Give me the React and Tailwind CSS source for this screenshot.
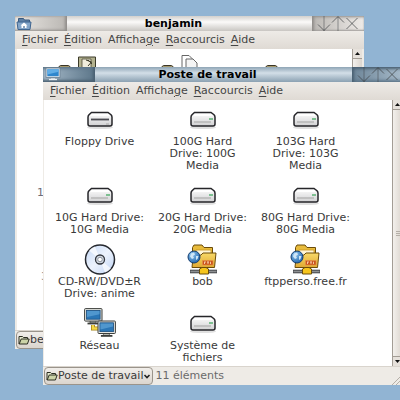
import React from "react";

const menus = [
  { before: "", key: "F", after: "ichier" },
  { before: "", key: "É", after: "dition" },
  { before: "Afficha", key: "g", after: "e" },
  { before: "", key: "R", after: "accourcis" },
  { before: "", key: "A", after: "ide" },
];

const places = [
  { name: "Floppy Drive", icon: "floppy" },
  { name: "100G Hard Drive: 100G Media", icon: "drive" },
  { name: "103G Hard Drive: 103G Media", icon: "drive" },
  { name: "10G Hard Drive: 10G Media", icon: "drive" },
  { name: "20G Hard Drive: 20G Media", icon: "drive" },
  { name: "80G Hard Drive: 80G Media", icon: "drive" },
  { name: "CD-RW/DVD±R Drive: anime", icon: "disc" },
  { name: "bob", icon: "ftp" },
  { name: "ftpperso.free.fr", icon: "ftp" },
  { name: "Réseau", icon: "network" },
  { name: "Système de fichiers", icon: "drive" },
];

function DriveIcon({ floppy }) {
  return (
    <svg width="32" height="32" viewBox="0 0 32 32">
      <ellipse cx="16" cy="23.5" rx="13" ry="1.6" fill="#000" opacity=".12" />
      <path
        d="M7.500 8.500h16.500l3 2.200c.7.7 1 1.500 1 2.500v6.800c0 1.400-.7 2-2 2H6c-1.300 0-2-.6-2-2v-6.800c0-1 .3-1.800 1-2.500z"
        fill="url(#driveBody)"
        stroke="#26262a"
        strokeWidth="1.500"
      />
      <path d="M8 10h16l2 2H6z" fill="#fff" />
      {floppy ? (
        <>
          <path d="M7 15.500h18" stroke="#4a4a50" strokeWidth="1.800" />
          <path d="M22 20h3" stroke="#aaa" />
        </>
      ) : (
        <>
          <path d="M7 18h17" stroke="#b4b4b4" strokeWidth="1.400" />
          <path d="M22 15h4" stroke="#4fae6b" strokeWidth="1.400" />
        </>
      )}
    </svg>
  );
}

function DiscIcon() {
  return (
    <svg width="32" height="32" viewBox="0 0 32 32">
      <circle cx="16" cy="15.500" r="14.500" fill="url(#discBody)" stroke="#25282e" strokeWidth="1.500" />
      <path d="M16 15.500L5 6.500a14 14 0 0 1 6-4z" fill="#fff" opacity=".7" />
      <path d="M16 15.500l11 9a14 14 0 0 1-6 4z" fill="#fff" opacity=".7" />
      <circle cx="16" cy="15.500" r="4.500" fill="#d4dbe5" stroke="#33373e" strokeWidth="1.300" />
      <circle cx="16" cy="15.500" r="2.300" fill="#fff" stroke="#8b929c" />
    </svg>
  );
}

function FtpIcon() {
  return (
    <svg width="32" height="32" viewBox="0 0 32 32">
      <path d="M5.500 20V3.500L7 1h8l2 2.500h8.500V12" fill="#e8bb3c" stroke="#6b4c0a" />
      <path d="M9 12V6h15v6" fill="#fff6d5" stroke="#c89520" strokeWidth=".8" />
      <path d="M5 23.500L6 13l8-2 2-2h13l-1.500 14.500z" fill="url(#folderBody)" stroke="#6b4c0a" />
      <rect x="15.500" y="16.500" width="10.500" height="4.500" fill="#c9541c" stroke="#e89248" strokeWidth=".6" />
      <path d="M17.500 17.700v2.300M17.500 18h1.500M21 17.700v2.300M23.500 17.700v2.300M20 18h2" stroke="#ffe1c2" strokeWidth=".8" />
      <circle cx="7" cy="13" r="6" fill="url(#globeBody)" stroke="#123c70" />
      <path d="M4 9.500l3-1 1 2-2 1.500 1 2-2 1-2-2.500zM9 12h2.500l-1 3-1.500 1z" fill="#cfe6f7" />
      <path d="M3 27.500h27" stroke="#45474a" strokeWidth="3.600" />
      <path d="M3.500 27.500h26" stroke="#8d9092" strokeWidth="1.600" />
      <path d="M12.500 30v-5l2.500-1.500h4l2.500 1.500v5z" fill="#f6c51d" stroke="#6b4c0a" />
    </svg>
  );
}

function Monitor({ x, y }) {
  return (
    <g transform={`translate(${x} ${y})`}>
      <path d="M6 12.500h6v2.500H6z" fill="#bfc3bd" stroke="#4a4c48" strokeWidth=".7" />
      <path d="M3.500 15.500h11.500" stroke="#3d3f3c" strokeWidth="1.800" />
      <rect x=".6" y=".6" width="17.400" height="12.500" rx=".8" fill="#e4e5e0" stroke="#3d3f3c" />
      <rect x="2.500" y="2.400" width="13.600" height="8.800" fill="#2a76b6" stroke="#1b4f80" strokeWidth=".8" />
      <path d="M3 3h12.600v3.200L3 9z" fill="#6aaede" opacity=".6" />
    </g>
  );
}

function NetworkIcon() {
  return (
    <svg width="32" height="32" viewBox="0 0 32 32">
      <path d="M9 17v3.500h6" fill="none" stroke="#a4831a" strokeWidth="4" />
      <path d="M9 17v3.500h6" fill="none" stroke="#f6d844" strokeWidth="2.400" />
      <Monitor x={0} y={0} />
      <Monitor x={13.4} y={12.4} />
    </svg>
  );
}

function PlaceIcon({ icon }) {
  if (icon === "disc") return <DiscIcon />;
  if (icon === "ftp") return <FtpIcon />;
  if (icon === "network") return <NetworkIcon />;
  return <DriveIcon floppy={icon === "floppy"} />;
}

function SharedGradients() {
  return (
    <svg className="absolute" width="0" height="0" aria-hidden="true">
      <defs>
        <linearGradient id="driveBody" x1="0" y1="0" x2="0" y2="1">
          <stop offset="0" stopColor="#fff" />
          <stop offset="1" stopColor="#d0d0d2" />
        </linearGradient>
        <linearGradient id="discBody" x1="0" y1="0" x2="1" y2="1">
          <stop offset="0" stopColor="#c3d7f5" />
          <stop offset=".5" stopColor="#edf3fd" />
          <stop offset="1" stopColor="#bdd2f3" />
        </linearGradient>
        <linearGradient id="folderBody" x1="0" y1="0" x2="0" y2="1">
          <stop offset="0" stopColor="#f8d968" />
          <stop offset="1" stopColor="#dfa932" />
        </linearGradient>
        <radialGradient id="globeBody" cx=".35" cy=".3" r=".8">
          <stop offset="0" stopColor="#8cc5ef" />
          <stop offset="1" stopColor="#1b5fa8" />
        </radialGradient>
      </defs>
    </svg>
  );
}

function HomeFolder() {
  return (
    <svg width="16" height="15" viewBox="0 0 16 15">
      <path d="M2.500 12V2.500h5l1 1.500h5V7" fill="#5d7fa3" stroke="#3a5a80" />
      <path d="M1 6h14l-1 7.500H2z" fill="#83a5c9" stroke="#3f648e" />
      <path d="M8 6.500l3.500 3h-1V12h-5V9.500h-1z" fill="#fff" />
      <path d="M7.300 10h1.400v2H7.300z" fill="#5d7fa3" />
    </svg>
  );
}

function ComputerIcon() {
  return (
    <svg width="16" height="15" viewBox="0 0 16 15">
      <rect x="1" y="1" width="14" height="9.500" fill="#dfe5ea" stroke="#6b7f91" strokeWidth=".8" />
      <rect x="2.300" y="2.300" width="11.400" height="6.900" fill="#2f86cc" />
      <path d="M2.300 2.300h11.400v2.500L2.300 7.500z" fill="#62aee6" />
      <path d="M6 11h4v1.500H6z" fill="#c8d0d6" />
      <path d="M4 12.500h8" stroke="#eef2f4" strokeWidth="1.300" />
    </svg>
  );
}

function OpenFolder() {
  return (
    <svg className="shrink-0" width="12" height="12" viewBox="0 0 12 12">
      <path d="M1 10V2.500h3.500l1 1H9.500V5" fill="#e4e8cc" stroke="#2c2e22" />
      <path d="M1.200 10l2-5h8l-1.800 5z" fill="#ccd4a8" stroke="#2c2e22" />
    </svg>
  );
}

function TitleBar({ title, active, children }) {
  return (
    <header
      className={
        active
          ? "flex h-[15px] shrink-0 items-stretch bg-linear-to-b from-[#8fa5b6] via-[#d3dfe8] via-40% to-[#8ba1b2]"
          : "flex h-[15px] shrink-0 items-stretch bg-linear-to-b from-[#d2d0cd] via-[#fbfaf9] via-40% to-[#c9c6c2]"
      }
    >
      <div
        className={
          active
            ? "flex w-[52px] shrink-0 items-center bg-linear-to-r from-[#a9bccb] to-[#5c7689] pl-0.5 shadow-[inset_-2px_-2px_3px_#4a6072,inset_0_2px_3px_#5f788b]"
            : "flex w-[52px] shrink-0 items-center bg-linear-to-r from-[#eae7e3] to-[#bab7b3] pl-px shadow-[inset_-2px_-1px_3px_#8f8c89,inset_0_1px_2px_#b5b2af]"
        }
      >
        {children}
      </div>
      <h1 className="min-w-0 flex-1 truncate pr-8 text-center font-bold leading-[15px] text-black">
        {title}
      </h1>
      <div
        className={
          active
            ? "flex w-[52px] shrink-0 justify-end bg-linear-to-r from-[#6d8598] to-[#a9bccb] shadow-[inset_2px_2px_3px_#4a6072,inset_0_-2px_3px_#5f788b]"
            : "flex w-[52px] shrink-0 justify-end bg-linear-to-r from-[#bab7b3] to-[#eeebe8] shadow-[inset_2px_1px_3px_#8f8c89,inset_0_-1px_2px_#a5a29f]"
        }
      >
        <button type="button" aria-label="Réduire" className="w-[14px]">
          <svg width="14" height="15" viewBox="0 0 14 15" fill="none" stroke="#3c4042" strokeWidth=".7">
            <path d="M7 0v15" opacity=".7" />
            <path d="M1 8.500l6 6 6-6" />
          </svg>
        </button>
        <button type="button" aria-label="Agrandir" className="w-[14px]">
          <svg width="14" height="15" viewBox="0 0 14 15" fill="none" stroke="#3c4042" strokeWidth=".7">
            <path d="M7 15V1" opacity=".7" />
            <path d="M1 6.500l6-6 6 6" />
          </svg>
        </button>
        <button type="button" aria-label="Fermer" className="w-[19px]">
          <svg width="19" height="15" viewBox="0 0 19 15" fill="none" stroke="#3c4042" strokeWidth=".7">
            <path d="M1.500 2l11 11M12.500 2l-11 11" />
          </svg>
        </button>
      </div>
    </header>
  );
}

function MenuBar() {
  return (
    <nav className="flex h-[18px] shrink-0 items-center gap-1.5 bg-linear-to-b from-[#eeebe7] to-[#dfdad4] pl-[7px] text-[#454545]">
      {menus.map((menu) => (
        <button type="button" key={menu.key}>
          {menu.before}
          <span className="underline underline-offset-2">{menu.key}</span>
          {menu.after}
        </button>
      ))}
    </nav>
  );
}

function ScrollBar() {
  return (
    <div className="flex w-[10px] shrink-0 flex-col border-l border-[#a39d95] bg-[#e6e1db]">
      <button type="button" aria-label="Monter" className="flex h-[10px] items-center justify-center border-b border-[#a39d95]">
        <svg width="5" height="3" viewBox="0 0 5 3"><path d="M0 3L2.500 0 5 3z" fill="#111" /></svg>
      </button>
      <div className="flex flex-1 flex-col items-center justify-center gap-px bg-linear-to-r from-[#f3f0ec] to-[#dcd6cf]">
        <span className="h-px w-1 bg-[#b5afa7]" />
        <span className="h-px w-1 bg-[#b5afa7]" />
        <span className="h-px w-1 bg-[#b5afa7]" />
      </div>
      <button type="button" aria-label="Descendre" className="flex h-[10px] items-center justify-center border-t border-[#a39d95]">
        <svg width="5" height="3" viewBox="0 0 5 3"><path d="M0 0h5L2.500 3z" fill="#111" /></svg>
      </button>
    </div>
  );
}

function StatusBar({ place, count }) {
  return (
    <footer className="flex h-[19px] shrink-0 items-stretch border-t border-[#d9d4cd] bg-[#eeebe6] pl-px">
      <button
        type="button"
        className="flex shrink-0 items-center rounded-sm border border-[#9a948b] bg-linear-to-b from-[#f1eeea] to-[#dbd5ce] px-px text-[#3a3a3a]"
      >
        <OpenFolder />
        {place}
        <svg width="8" height="5" viewBox="0 0 8 5">
          <path d="M1.500 1L4 3.500 6.500 1" fill="none" stroke="#222" strokeWidth="1.600" />
        </svg>
      </button>
      <p className="flex-1 pl-0.5 leading-[18px] text-[#6a6a6a]">{count}</p>
      <svg className="self-end" width="13" height="13" viewBox="0 0 13 13" stroke="#b5afa7">
        <path d="M1 13L13 1M5 13l8-8M9 13l4-4" />
      </svg>
    </footer>
  );
}

function HomeWindow() {
  return (
    <section className="absolute left-[15px] right-9 top-4 flex h-[333px] flex-col bg-[#eeebe6]">
      <TitleBar title="benjamin">
        <HomeFolder />
      </TitleBar>
      <MenuBar />
      <div className="flex min-h-0 flex-1 px-0.5">
        <div className="min-w-0 flex-1 bg-white">
          <svg width="270" height="30" viewBox="17 49 270 30">
            <path d="M58.500 70v-3l2-1.500h8l2 1.500v3zM161.500 70v-3l2-1.500h8l2 1.500v3zM265.500 70v-3l2-1.500h8l2 1.500v3z" fill="#a5986c" stroke="#3a3526" />
            <path d="M78.500 57h17v14h-17z" fill="#b3b28f" stroke="#3c3b2a" />
            <path d="M82 59h9v12h-9z" fill="#f0eddc" stroke="#4b4a36" strokeWidth=".8" />
            <path d="M86 60l5.500 2-3.500 4M88 60l4 4" fill="none" stroke="#3c3b2a" />
            <path d="M182 55.500h7l3 3v12h-10z" fill="#fff" stroke="#666" />
            <path d="M186 59h7l4 4v9h-11z" fill="#f4f4f4" stroke="#666" />
          </svg>
          <p className="mt-[108px] pl-5 leading-3 text-[#6d6d78]">1</p>
          <p className="mt-[72px] pl-6 leading-3 text-[#8d8d94]">3</p>
        </div>
        <ScrollBar />
      </div>
      <StatusBar place="benjamin" />
    </section>
  );
}

function ComputerWindow() {
  return (
    <section className="absolute -right-1 left-[43px] top-[67px] flex h-[318px] flex-col bg-[#eeebe6]">
      <TitleBar title="Poste de travail" active>
        <ComputerIcon />
      </TitleBar>
      <MenuBar />
      <div className="flex min-h-0 flex-1 pl-px pr-0.5">
        <ul className="grid min-w-0 flex-1 grid-cols-[repeat(auto-fill,103px)] content-start gap-y-2 bg-white pl-1 pt-1">
          {places.map((place) => (
            <li key={place.name} className="flex flex-col items-center text-center leading-3 text-[#3a3a3a]">
              <PlaceIcon icon={place.icon} />
              <span className="max-w-[94px]">{place.name}</span>
            </li>
          ))}
        </ul>
        <ScrollBar />
      </div>
      <StatusBar place="Poste de travail" count="11 éléments" />
    </section>
  );
}

export default function App() {
  return (
    <main className="relative h-screen overflow-hidden bg-[#91b4d3] font-['DejaVu_Sans','Noto_Sans',sans-serif] text-[11px]">
      <SharedGradients />
      <HomeWindow />
      <ComputerWindow />
    </main>
  );
}
